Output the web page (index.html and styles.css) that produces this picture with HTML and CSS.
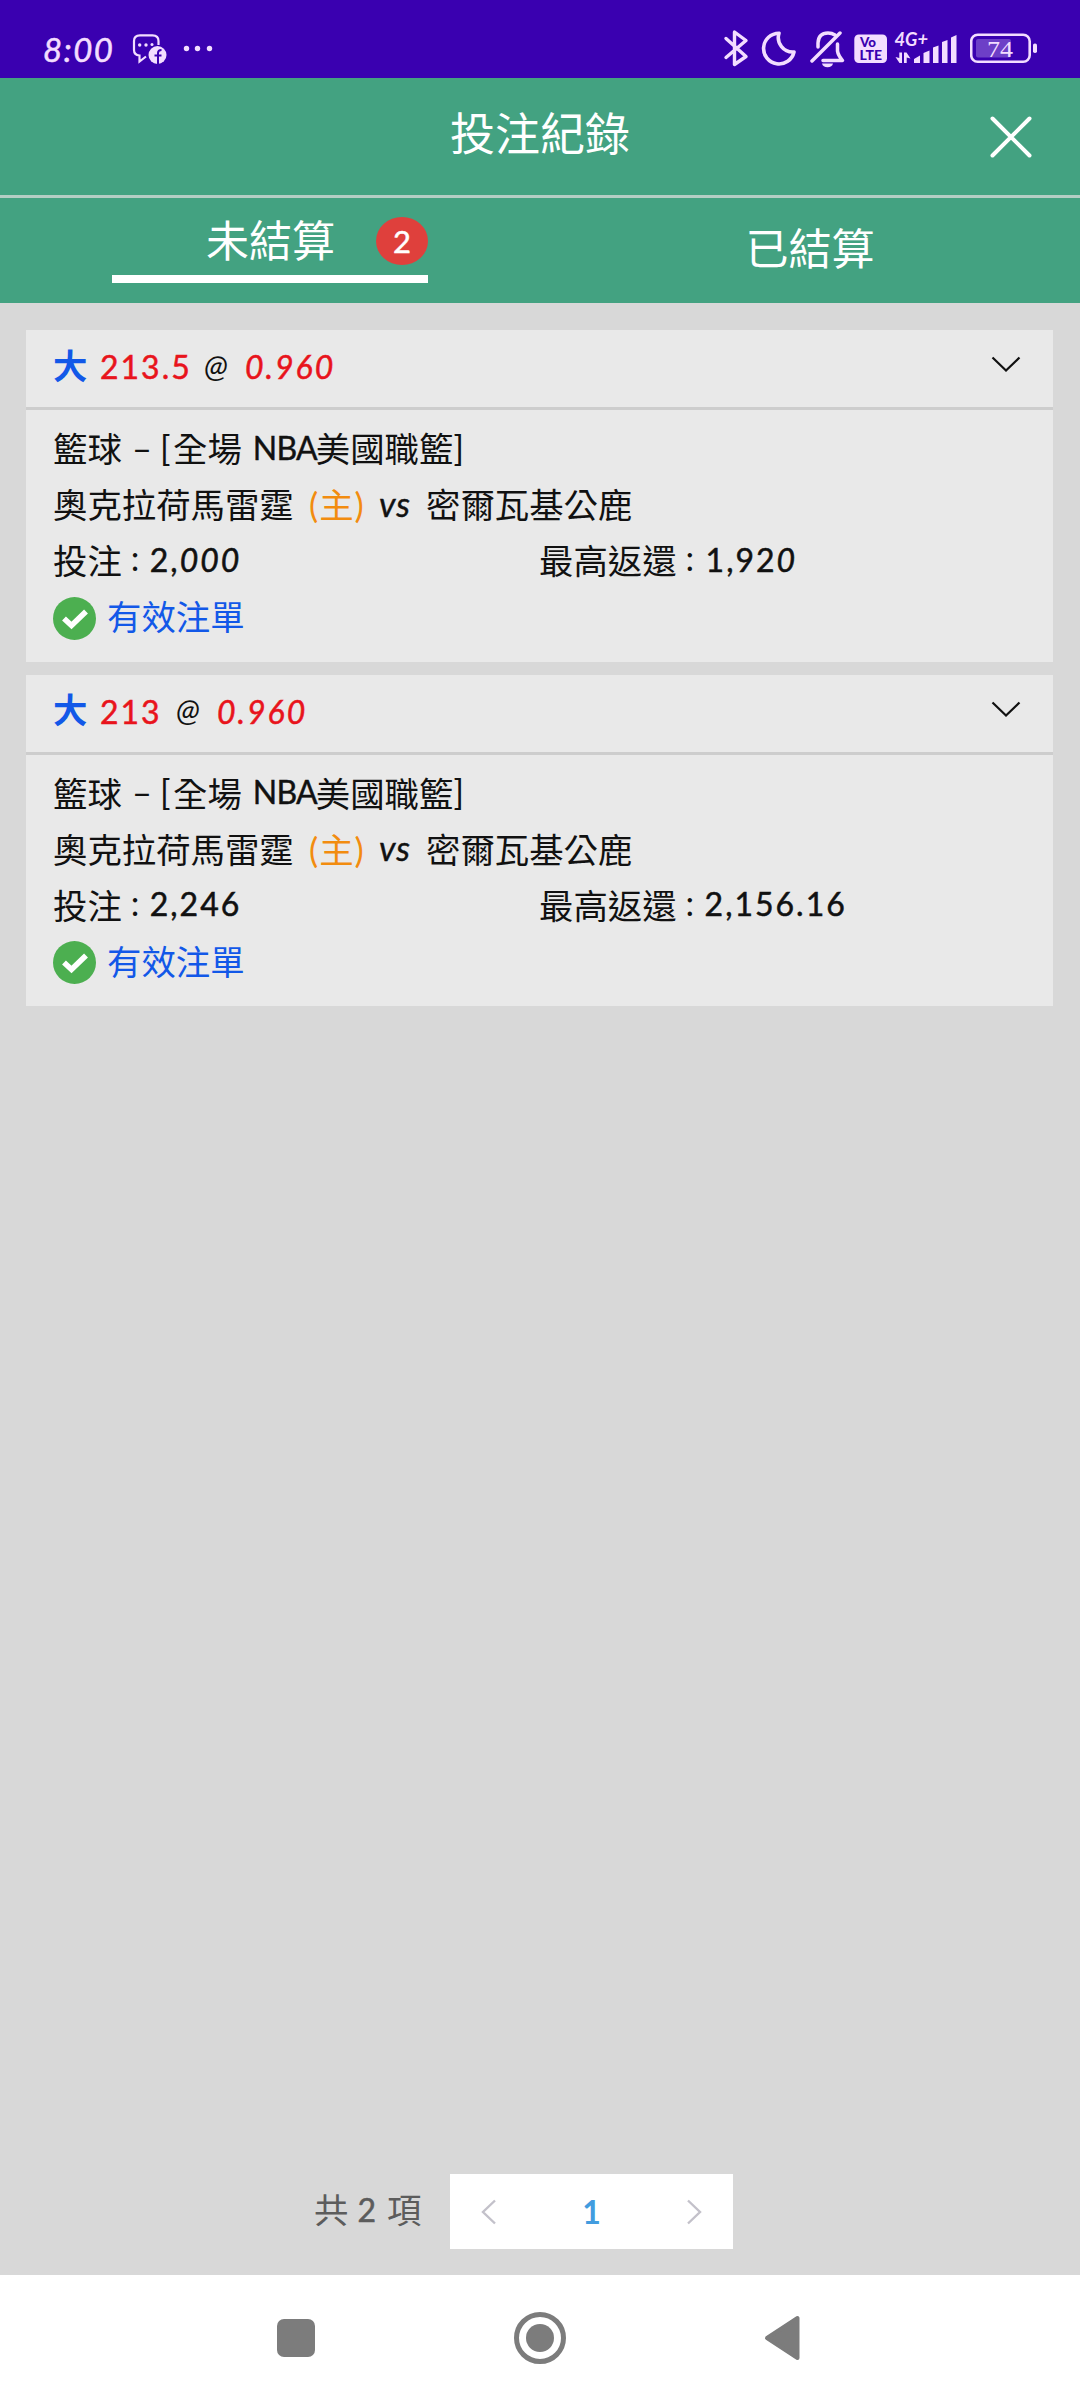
FILE: index.html
```html
<!DOCTYPE html>
<html lang="zh-Hant">
<head>
<meta charset="utf-8">
<title>投注紀錄</title>
<link rel="stylesheet" href="styles.css">
</head>
<body>
<div class="status">
  <div class="status-left">
    <span class="clock">8:00</span>
    <svg width="36" height="78" viewBox="131 0 36 78">
      <path d="M158.500 45V41Q158.500 35.300 152.500 35.300H140Q134 35.300 134 41V50Q134 55 139.500 55.500V61.500L146 56.500" fill="none" stroke="#f3ddff" stroke-width="2.200"/>
      <g fill="#f3ddff"><circle cx="139.700" cy="45" r="1.700"/><circle cx="146" cy="45" r="1.700"/><circle cx="152" cy="44.500" r="1.500"/><circle cx="157.500" cy="55" r="9"/></g>
      <path d="M158 64V53Q158 50 161.500 50M154.500 55.500H161.500" fill="none" stroke="#3a00b0" stroke-width="2"/>
    </svg>
    <svg width="32" height="78" viewBox="182 0 32 78" fill="#f3ddff"><circle cx="186.500" cy="48.500" r="2.700"/><circle cx="197.500" cy="48.500" r="2.700"/><circle cx="209.500" cy="48.500" r="2.700"/></svg>
  </div>
  <div class="status-right">
    <svg width="26" height="78" viewBox="724 0 26 78"><path d="M727 38.500L747 56.500L735.500 64.500V32L747 40.500L727 57.500" fill="none" stroke="#f3ddff" stroke-width="3.400" stroke-linejoin="round" stroke-linecap="round"/></svg>
    <svg width="36" height="78" viewBox="762 0 36 78"><path d="M780 33.200A15.400 15.400 0 1 0 795 52A14.500 14.500 0 0 1 780 33.200Z" fill="none" stroke="#f3ddff" stroke-width="3.600" stroke-linejoin="round"/></svg>
    <svg width="36" height="78" viewBox="811 0 36 78"><g fill="none" stroke="#f3ddff" stroke-width="3.500" stroke-linecap="round" stroke-linejoin="round"><path d="M813 61L841 33"/><path d="M819 47V43Q819.500 33 829 33Q833 33 836 35M838.500 44V51Q839 55 843.500 60.500H824"/></g><path d="M823 63.500H834Q833 67.300 828.500 67.300Q824 67.300 823 63.500Z" fill="#f3ddff"/></svg>
    <svg width="34" height="78" viewBox="855 0 34 78"><rect x="855.300" y="34.500" width="32.700" height="28.500" rx="4.500" fill="#f3ddff"/><g class="volte"><text x="861" y="46.800" textLength="16" lengthAdjust="spacingAndGlyphs">Vo</text><text x="860.500" y="59.800" textLength="22.500" lengthAdjust="spacingAndGlyphs">LTE</text></g></svg>
    <svg width="64" height="78" viewBox="895 0 64 78"><text class="network" x="895.500" y="45.500" textLength="33.500" lengthAdjust="spacingAndGlyphs">4G+</text><g fill="#f3ddff"><path d="M896.500 57L900.300 58V52.500H903V63H900.500ZM905 63V52.500H907.500L911.500 58.500L907.700 57.500V63Z"/><path d="M915 63V59L921 55.500V63ZM924.500 63V53L930.500 50.500V63ZM934 63V47.500L939.500 45.500V63ZM943 63V42L948.500 40V63ZM952 63V37.500L957.500 35V63Z"/></g></svg>
    <svg width="68" height="78" viewBox="971 0 68 78"><rect x="972.200" y="34.700" width="58.500" height="27" rx="6.500" fill="none" stroke="#f3ddff" stroke-width="2.600"/><rect x="977" y="39" width="35" height="18.500" rx="2" fill="#6d3fc7"/><rect x="1034" y="43.500" width="4" height="9.500" rx="1.800" fill="#f3ddff"/><text class="battery" x="988" y="57" textLength="26" lengthAdjust="spacingAndGlyphs">74</text></svg>
  </div>
</div>

<header class="header">
  <h1 class="title">投注紀錄</h1>
  <svg class="close" width="46" height="46" viewBox="0 0 46 46"><path d="M4.500 4.500L41.500 41.500M41.500 4.500L4.500 41.500" stroke="#fff" stroke-width="4" stroke-linecap="round"/></svg>
</header>

<nav class="tabs">
  <div class="tab"><div class="tab-active"><span class="tab-label">未結算</span><b class="badge">2</b></div></div>
  <div class="tab"><span class="tab-idle">已結算</span></div>
</nav>

<main class="list">
  <section class="card">
    <div class="card-head">
      <b class="side">大</b><span class="num red w-line">213.5</span><i class="num at">@</i><i class="num red">0.960</i>
      <svg class="chevron" width="30" height="17" viewBox="0 0 30 17"><path d="M1.500 1.500L15 14.500L28.500 1.500" fill="none" stroke="#111" stroke-width="2.200"/></svg>
    </div>
    <div class="card-body">
      <div class="row"><span class="w-sport">籃球</span><span class="dash">–</span><span class="open">[</span><span>全場</span><span class="nba">NBA</span><span>美國職籃</span><span>]</span></div>
      <div class="row"><span class="w-team">奧克拉荷馬雷霆</span><span class="home">(主)</span><i class="vs">vs</i><span>密爾瓦基公鹿</span></div>
      <div class="row split"><div class="row"><span>投注</span><span class="colon">:</span><span class="num">2,<i>000</i></span></div><div class="row"><span>最高返還</span><span class="colon">:</span><span class="num one">1,92<i>0</i></span></div></div>
      <div class="row valid"><svg width="43" height="43" viewBox="0 0 43 43"><circle cx="21.500" cy="21.500" r="21.500" fill="#4caf50"/><path d="M11 21.500L18.500 28.500L33 14.500" fill="none" stroke="#fff" stroke-width="5.600"/></svg><span>有效注單</span></div>
    </div>
  </section>
  <section class="card">
    <div class="card-head">
      <b class="side">大</b><span class="num red w-short">213</span><i class="num at">@</i><i class="num red">0.960</i>
      <svg class="chevron" width="30" height="17" viewBox="0 0 30 17"><path d="M1.500 1.500L15 14.500L28.500 1.500" fill="none" stroke="#111" stroke-width="2.200"/></svg>
    </div>
    <div class="card-body">
      <div class="row"><span class="w-sport">籃球</span><span class="dash">–</span><span class="open">[</span><span>全場</span><span class="nba">NBA</span><span>美國職籃</span><span>]</span></div>
      <div class="row"><span class="w-team">奧克拉荷馬雷霆</span><span class="home">(主)</span><i class="vs">vs</i><span>密爾瓦基公鹿</span></div>
      <div class="row split"><div class="row"><span>投注</span><span class="colon">:</span><span class="num">2,246</span></div><div class="row"><span>最高返還</span><span class="colon">:</span><span class="num">2,156.16</span></div></div>
      <div class="row valid"><svg width="43" height="43" viewBox="0 0 43 43"><circle cx="21.500" cy="21.500" r="21.500" fill="#4caf50"/><path d="M11 21.500L18.500 28.500L33 14.500" fill="none" stroke="#fff" stroke-width="5.600"/></svg><span>有效注單</span></div>
    </div>
  </section>
</main>

<footer class="pager">
  <div class="total"><span>共</span><span class="num">2</span><span>項</span></div>
  <div class="pages">
    <svg width="16" height="26" viewBox="0 0 16 26"><path d="M14 1.500L2 13L14 24.500" fill="none" stroke="#c3c1ca" stroke-width="2.400"/></svg>
    <b class="page">1</b>
    <svg width="16" height="26" viewBox="0 0 16 26"><path d="M2 1.500L14 13L2 24.500" fill="none" stroke="#c3c1ca" stroke-width="2.400"/></svg>
  </div>
</footer>

<div class="system-nav">
  <svg width="38" height="38" viewBox="0 0 38 38"><rect width="38" height="38" rx="7" fill="#7c7c7c"/></svg>
  <svg width="52" height="52" viewBox="0 0 52 52"><circle cx="26" cy="26" r="23.500" fill="none" stroke="#7c7c7c" stroke-width="5"/><circle cx="26" cy="26" r="14" fill="#7c7c7c"/></svg>
  <svg width="38" height="46" viewBox="0 0 38 46"><path d="M34.500 3V43L4 23Z" fill="#7c7c7c" stroke="#7c7c7c" stroke-width="4" stroke-linejoin="round"/></svg>
</div>
</body>
</html>
```
FILE: styles.css
```css
* { box-sizing: border-box; }
body {
  margin: 0;
  width: 1080px;
  height: 2401px;
  display: flex;
  flex-direction: column;
  background: #d8d8d8;
  color: #111;
  font-family: Lato, "Noto Sans CJK TC", sans-serif;
  font-size: 34.4px;
  overflow: hidden;
}
svg { display: block; flex: none; }

.status {
  height: 78px;
  flex: none;
  display: flex;
  justify-content: space-between;
  padding: 0 42px 0 43px;
  background: #3a00b0;
  color: #f3ddff;
}
.status-left { display: flex; }
.clock {
  width: 88px;
  padding-top: 10px;
  line-height: 78px;
  height: 78px;
  font-size: 33px;
  font-style: italic;
  letter-spacing: 1.4px;
  -webkit-text-stroke: 0.5px;
}
.status-left svg + svg { margin-left: 15px; }
.status-right { display: flex; }
.status-right svg:nth-child(2) { margin-left: 12px; }
.status-right svg:nth-child(3) { margin-left: 13px; }
.status-right svg:nth-child(4) { margin-left: 8px; }
.status-right svg:nth-child(5) { margin-left: 6px; }
.status-right svg:nth-child(6) { margin-left: 12px; }
.volte { font: 900 12.500px Lato, sans-serif; fill: #3a00b0; }
.network { font: italic 700 18px Lato, sans-serif; fill: #f3ddff; }
.battery { font: 23px "Liberation Serif", serif; fill: #f3ddff; }

.header {
  height: 120px;
  flex: none;
  display: grid;
  grid-template-columns: 1fr auto 1fr;
  align-items: center;
  padding: 0 46px;
  border-bottom: 3px solid #b4cec4;
  background: #43a281;
}
.title {
  grid-column: 2;
  margin: 0 0 5px;
  font-size: 45px;
  line-height: 60px;
  font-weight: 400;
  color: #fff;
}
.close { justify-self: end; }

.tabs {
  height: 105px;
  flex: none;
  display: grid;
  grid-template-columns: 1fr 1fr;
  background: #43a281;
  color: #fff;
  font-size: 43px;
}
.tab { display: flex; justify-content: center; }
.tab-active {
  width: 316px;
  height: 85px;
  display: flex;
  justify-content: flex-end;
  align-items: center;
  gap: 41px;
  border-bottom: 8px solid #fff;
}
.tab-label { padding-top: 8px; line-height: 69px; }
.badge {
  width: 52px;
  height: 48px;
  margin-top: 9px;
  border-radius: 50%;
  background: #df403c;
  font-size: 31px;
  font-weight: 400;
  line-height: 48px;
  text-align: center;
  -webkit-text-stroke: 0.5px;
}
.tab-idle { line-height: 101px; }

.list {
  flex: 1;
  display: flex;
  flex-direction: column;
  gap: 13px;
  padding: 27px 27px 0 26px;
}
.card { height: 331.500px; background: #e9e9e9; }
.card-head {
  height: 80px;
  display: flex;
  align-items: center;
  padding: 0 32px 8px 27px;
  border-bottom: 3px solid #cdcdcd;
}
.side { width: 47px; margin-top: -2px; color: #1258e8; font-weight: 700; }
.num { font-size: 32px; letter-spacing: 2px; -webkit-text-stroke: 0.5px; }
.card-head .num { margin-top: 4px; }
.red { color: #e8141c; }
.w-line { width: 104px; }
.w-short { width: 76px; }
.card-head .at { width: 41px; font-size: 31px; letter-spacing: 0; margin-top: 0; -webkit-text-stroke: 0; }
.chevron { margin-left: auto; }
.card-body { padding: 9px 27px 0; }
.row { display: flex; align-items: center; height: 56px; white-space: pre; }
.w-sport { width: 79px; }
.dash { width: 28px; }
.open { width: 13px; }
.nba { margin-left: 11px; width: 63px; font-size: 32px; letter-spacing: -0.8px; -webkit-text-stroke: 0.4px; }
.w-team { width: 256px; }
.home { width: 70px; letter-spacing: 1px; color: #f28c0f; }
.vs { width: 47px; letter-spacing: 1px; -webkit-text-stroke: 0.4px; }
.split { display: grid; grid-template-columns: 486px 1fr; }
.colon { width: 28px; padding-left: 9px; margin-top: -3px; }
.one { margin-left: 1px; }
.valid { gap: 11px; color: #1258e8; }
.valid svg { margin-top: 6px; }

.pager {
  flex: none;
  height: 101px;
  display: flex;
  align-items: flex-start;
  padding-left: 314px;
}
.total { width: 136px; display: flex; gap: 9px; line-height: 72px; color: #5c5c5c; }
.pages {
  width: 283px;
  height: 75px;
  display: flex;
  align-items: center;
  justify-content: space-between;
  padding: 0 31px;
  background: #fff;
}
.page { font-size: 32px; color: #429cdf; }

.system-nav {
  height: 126px;
  flex: none;
  display: flex;
  align-items: center;
  padding-left: 277px;
  background: #fff;
}
.system-nav svg:nth-child(2) { margin-left: 199px; }
.system-nav svg:nth-child(3) { margin-left: 197px; }
```
